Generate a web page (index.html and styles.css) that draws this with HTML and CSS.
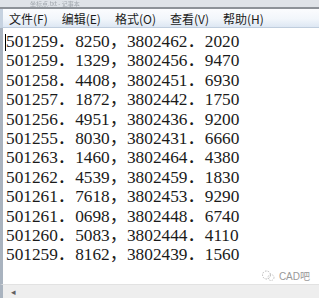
FILE: index.html
```html
<!DOCTYPE html>
<html lang="zh-CN">
  <head>
    <meta charset="UTF-8" />
    <title>坐标.txt - 记事本</title>
    <link rel="stylesheet" href="styles.css">
  </head>
  <body>
    <div class="window">
      <div class="titlebar"><span class="title-text">坐标点.txt - 记事本</span></div>
      <div class="menubar">
        <span class="menu-item">文件(F)</span>
        <span class="menu-item">编辑(E)</span>
        <span class="menu-item">格式(O)</span>
        <span class="menu-item">查看(V)</span>
        <span class="menu-item">帮助(H)</span>
      </div>
      <div class="editor">
        <div class="lines">
          <div class="line"><span class="caret"></span>501259．8250，3802462．2020</div>
          <div class="line">501259．1329，3802456．9470</div>
          <div class="line">501258．4408，3802451．6930</div>
          <div class="line">501257．1872，3802442．1750</div>
          <div class="line">501256．4951，3802436．9200</div>
          <div class="line">501255．8030，3802431．6660</div>
          <div class="line">501263．1460，3802464．4380</div>
          <div class="line">501262．4539，3802459．1830</div>
          <div class="line">501261．7618，3802453．9290</div>
          <div class="line">501261．0698，3802448．6740</div>
          <div class="line">501260．5083，3802444．4110</div>
          <div class="line">501259．8162，3802439．1560</div>
        </div>
        <div class="watermark">
          <svg class="wm-icon" width="14" height="12" viewBox="0 0 14 12">
            <circle cx="5.5" cy="5" r="4" fill="none" stroke="#b8b8b8" stroke-width="1" stroke-dasharray="1.6 1.2" />
            <circle cx="10" cy="7.5" r="3" fill="none" stroke="#c4c4c4" stroke-width="1" stroke-dasharray="1.4 1.1" />
          </svg>
          <span>CAD吧</span>
        </div>
      </div>
      <div class="scrollbar">
        <span class="arrow">◂</span>
      </div>
    </div>
  </body>
</html>
```

FILE: styles.css
```css
/* Base */
* {
  box-sizing: border-box;
}
body {
  margin: 0;
  background-color: #ffffff;
  font-family: "Noto Sans CJK SC", sans-serif;
}
.window {
  width: 319px;
  height: 298px;
  overflow: hidden;
  display: flex;
  flex-direction: column;
}

/* Title bar (only its lower edge is in view) */
.titlebar {
  height: 9px;
  overflow: hidden;
  background-color: #dfe3e8;
  border-bottom: 2px solid #8d9298;
  padding-left: 30px;
}
.title-text {
  display: block;
  font-size: 6px;
  line-height: 7px;
  color: #a2a8ae;
  filter: blur(0.7px);
}

/* Menu */
.menubar {
  height: 19px;
  display: flex;
  align-items: center;
  gap: 14px;
  padding-left: 6px;
  background: linear-gradient(#fbfcfe, #f2f6fb 55%, #dde7f3);
  border-bottom: 1px solid #bfcddd;
  border-left: 3px solid #c6d2e0;
}
.menu-item {
  font-size: 12px;
  color: #1b1b1b;
  line-height: 19px;
}

/* Text area */
.editor {
  flex: 1;
  display: flex;
  flex-direction: column;
  border-left: 3px solid #a9b3bf;
  padding-left: 3px;
  padding-top: 4px;
}
.lines {
  flex: 1;
}
.line {
  position: relative;
  font-family: "Liberation Serif", "Noto Sans CJK SC", serif;
  font-size: 17.3px;
  line-height: 19.4px;
  color: #1a1a1a;
  white-space: nowrap;
}
.caret {
  position: absolute;
  left: -1px;
  top: 2px;
  width: 1px;
  height: 17px;
  background-color: #000;
}

.watermark {
  display: flex;
  align-items: center;
  justify-content: flex-end;
  gap: 4px;
  padding-right: 9px;
  padding-bottom: 1px;
  font-family: "Liberation Sans", "Noto Sans CJK SC", sans-serif;
  font-size: 10px;
  color: #9a9a9a;
}

/* Horizontal scrollbar */
.scrollbar {
  height: 14px;
  background-color: #eeeeee;
  border-top: 1px solid #e2e2e2;
  border-left: 3px solid #a9b3bf;
  padding-left: 8px;
  font-size: 9px;
  line-height: 13px;
  color: #606060;
}
```
